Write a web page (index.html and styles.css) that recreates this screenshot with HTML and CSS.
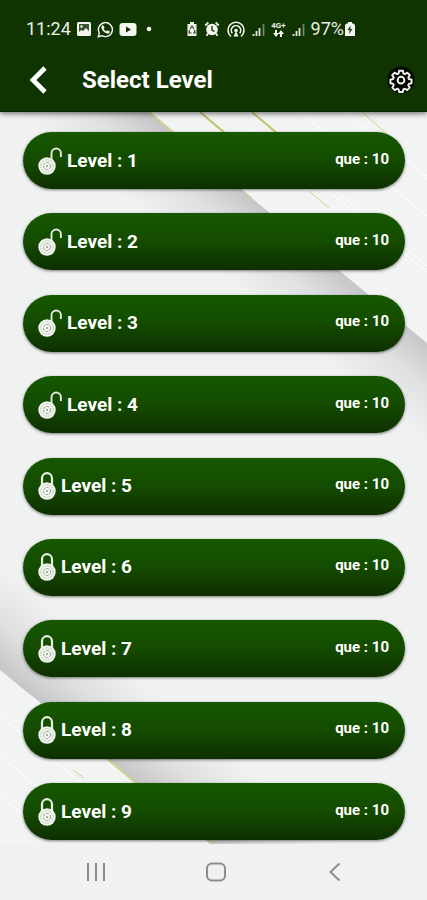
FILE: index.html
```html
<!DOCTYPE html>
<html lang="en">
<head>
<meta charset="utf-8">
<meta name="viewport" content="width=device-width, initial-scale=1">
<title>Select Level</title>
<link rel="stylesheet" href="styles.css">
</head>
<body>
<svg class="symbols" aria-hidden="true">
  <defs>
    <g id="dial">
      <circle cx="9" cy="19" r="8.7" fill="#f4f6f1"/>
      <circle cx="9" cy="19" r="6.2" fill="none" stroke="#a3b29d" stroke-width=".9" stroke-dasharray="1.4 1"/>
      <circle cx="9" cy="19" r="3.6" fill="none" stroke="#879b81" stroke-width=".9" stroke-dasharray="3 1"/>
      <circle cx="9" cy="19" r="1.2" fill="#a3b29d"/>
    </g>
    <symbol id="unlocked" viewBox="0 0 24 28">
      <path d="M13.500 13V6.200a4.700 4.700 0 0 1 9.400 0V10" fill="none" stroke="#e3eadf" stroke-width="1.900"/>
      <use href="#dial"/>
    </symbol>
    <symbol id="locked" viewBox="0 0 18 28">
      <path d="M4 13V6.200a5 5 0 0 1 10 0V13" fill="none" stroke="#e9efe5" stroke-width="2.200"/>
      <use href="#dial"/>
    </symbol>
    <symbol id="signal" viewBox="0 0 13 14">
      <path d="M1.500 14v-2M4.500 14v-5M7.500 14V6" stroke="#dfe6db" stroke-width="1.800"/>
      <path d="M11.500 14V2" stroke="#718865" stroke-width="1.800"/>
    </symbol>
  </defs>
</svg>

<header class="top">
  <div class="status">
    <div class="status-left">
      <span>11:24</span>
      <svg width="16" height="16" viewBox="0 0 16 16"><rect x="1" y="1" width="14" height="14" rx="1.500" fill="#f2f5f0"/><path d="M3 3h10v7l-3-3-3 3-2-1-2 2z" fill="#38542c"/><circle cx="5.500" cy="5.500" r="1.200" fill="#f2f5f0"/></svg>
      <svg width="17" height="17" viewBox="0 0 17 17"><path d="M1.300 15.700l1-3.700A7 7 0 1 1 5 14.700z" fill="none" stroke="#f2f5f0" stroke-width="1.400"/><path d="M5 4.500l1.300-.3 1.300 2.500-.9 1.100c.6 1.300 1.300 1.900 2.600 2.500l1-1.100 2.500 1.200c0 1.500-1 2.300-2.200 2.200C7.300 12 4.600 9.200 4.300 6.300z" fill="#f2f5f0"/></svg>
      <svg width="18" height="16" viewBox="0 0 18 16"><rect x=".5" y="2" width="17" height="13" rx="3" fill="#f2f5f0"/><path d="M7 5.500l5 3-5 3z" fill="#103400"/></svg>
      <svg class="dot" width="6" height="16" viewBox="0 0 6 16"><circle cx="3" cy="8" r="2.300" fill="#f2f5f0"/></svg>
    </div>
    <div class="status-right">
      <svg width="12" height="16" viewBox="0 0 12 16"><path d="M4 1h4v2h2.500v12h-9V3H4z" fill="#f2f5f0"/><path d="M4 8l2-3 2 3M3.500 9l-.5 3h2.500M8.500 9l.5 3H7" fill="none" stroke="#284619" stroke-width="1.200"/></svg>
      <svg width="16" height="16" viewBox="0 0 16 16"><circle cx="8" cy="8.500" r="5.800" fill="#f2f5f0"/><path d="M1.300 4.500l3-3M14.700 4.500l-3-3M4 12.500l-1.500 2.300M12 12.500l1.500 2.300" stroke="#f2f5f0" stroke-width="1.900"/><path d="M8 5v4l2.500 1.500" fill="none" stroke="#103400" stroke-width="1.400"/></svg>
      <svg width="20" height="17" viewBox="0 0 20 17"><g fill="none" stroke="#f2f5f0" stroke-width="1.600"><path d="M5 15.500a8 8 0 1 1 10 0"/><path d="M6.300 12.300a4.700 4.700 0 1 1 7.400 0"/></g><circle cx="10" cy="9.500" r="1.800" fill="#f2f5f0"/><path d="M10 10l2.500 5.500h-5z" fill="#f2f5f0"/></svg>
      <svg width="13" height="14"><use href="#signal"/></svg>
      <span class="network"><span>4G+</span><svg width="11" height="7" viewBox="0 0 11 7"><path d="M0 3h2V0h2v3h2L3 7zM5 4l3-4 3 4H9v3H7V4z" fill="#f2f5f0"/></svg></span>
      <svg width="13" height="14"><use href="#signal"/></svg>
      <span class="charge">97%<svg width="12" height="16" viewBox="0 0 12 16"><path d="M4 1h4v1.500h1.500L11 4v11H1V4l1.500-1.500H4z" fill="#f2f5f0"/><path d="M6.500 4.500L3.500 9h2l-.5 4 3.500-5h-2z" fill="#284619"/></svg></span>
    </div>
  </div>
  <div class="bar">
    <button class="icon-button" type="button" aria-label="Back"><svg width="20" height="28" viewBox="0 0 20 28"><path d="M17 2L5 14l12 12" fill="none" stroke="#fff" stroke-width="4.800"/></svg></button>
    <h1>Select Level</h1>
    <button class="icon-button" type="button" aria-label="Settings"><svg width="28" height="28" viewBox="0 0 28 28"><circle cx="14" cy="14" r="13.500" fill="#040a02"/><g transform="translate(14 14) scale(.86) translate(-14 -14.300)" fill="none" stroke="#f4f4f4" stroke-width="2.200" stroke-linejoin="round"><path d="M11.800 3.600h4.400l.6 3.100 1.700.8 2.800-1.700 3 3-1.800 2.700.6 1.600 3.200.8v4.200l-3.200.7-.7 1.600 1.800 2.800-3 2.900-2.700-1.700-1.700.7-.7 3.200h-4.200l-.7-3.200-1.700-.7-2.700 1.700-3-2.900 1.800-2.800-.7-1.600-3.200-.7v-4.200l3.200-.8.700-1.600-1.900-2.700 3-3 2.800 1.700 1.700-.8z"/><circle cx="14" cy="14.500" r="3.900"/></g></svg></button>
  </div>
</header>

<main class="levels-area">
  <svg class="backdrop" viewBox="0 0 427 732" preserveAspectRatio="xMidYMid slice" aria-hidden="true">
    <defs>
      <linearGradient id="upper" gradientUnits="userSpaceOnUse" x1="266" y1="98" x2="216" y2="159"><stop offset="0" stop-color="#c6c6c8"/><stop offset=".45" stop-color="#dfe0e1"/><stop offset="1" stop-color="#f0f2f2"/></linearGradient>
      <linearGradient id="lower" gradientUnits="userSpaceOnUse" x1="60" y1="608" x2="112" y2="545"><stop offset="0" stop-color="#c6c6c8"/><stop offset=".45" stop-color="#dfdfe0"/><stop offset="1" stop-color="#f0f2f2"/></linearGradient>
    </defs>
    <rect width="427" height="732" fill="#f0f2f2"/>
    <path d="M148 0L427 231V400L0 47V0z" fill="url(#upper)"/>
    <path d="M0 558L210 732H427V720L0 367z" fill="url(#lower)"/>
    <path d="M148 0H427V231z" fill="#f2f3f3"/>
    <path d="M0 558L210 732H0z" fill="#f2f3f3"/>
    <g fill="none" stroke="#fff" stroke-width="1">
      <path d="M300 0L427 104M345 0L427 67M330 75L427 154M385 30L427 64M250 15L427 160M0 604L155 732M0 644L107 732M0 684L60 732M30 583L120 657"/>
    </g>
    <g fill="none" stroke="#d3cf8c" stroke-width="2">
      <path d="M149 0L174 21M105 645L137 672M198 718L214 732"/>
      <path d="M200 0L226 22M252 0L278 22" stroke="#c5bf68"/>
      <path d="M362 0L387 22M347 57L366 74M309 79L329 96M241 77L252 86M73 658L84 666" stroke-width="1"/>
    </g>
  </svg>
  <ul class="levels">
    <li><button class="level" type="button"><svg width="24" height="28"><use href="#unlocked"/></svg><span class="name">Level : 1</span><span class="count">que : 10</span></button></li>
    <li><button class="level" type="button"><svg width="24" height="28"><use href="#unlocked"/></svg><span class="name">Level : 2</span><span class="count">que : 10</span></button></li>
    <li><button class="level" type="button"><svg width="24" height="28"><use href="#unlocked"/></svg><span class="name">Level : 3</span><span class="count">que : 10</span></button></li>
    <li><button class="level" type="button"><svg width="24" height="28"><use href="#unlocked"/></svg><span class="name">Level : 4</span><span class="count">que : 10</span></button></li>
    <li><button class="level" type="button"><svg width="18" height="28"><use href="#locked"/></svg><span class="name">Level : 5</span><span class="count">que : 10</span></button></li>
    <li><button class="level" type="button"><svg width="18" height="28"><use href="#locked"/></svg><span class="name">Level : 6</span><span class="count">que : 10</span></button></li>
    <li><button class="level" type="button"><svg width="18" height="28"><use href="#locked"/></svg><span class="name">Level : 7</span><span class="count">que : 10</span></button></li>
    <li><button class="level" type="button"><svg width="18" height="28"><use href="#locked"/></svg><span class="name">Level : 8</span><span class="count">que : 10</span></button></li>
    <li><button class="level" type="button"><svg width="18" height="28"><use href="#locked"/></svg><span class="name">Level : 9</span><span class="count">que : 10</span></button></li>
  </ul>
</main>

<nav class="system-nav" aria-label="System">
  <button class="icon-button" type="button" aria-label="Recent apps"><svg width="20" height="20" viewBox="0 0 20 20"><path d="M2 1v18M10 1v18M18 1v18" stroke="#8c8c8c" stroke-width="2"/></svg></button>
  <button class="icon-button" type="button" aria-label="Home"><svg width="20" height="20" viewBox="0 0 20 20"><rect x="1" y="1.500" width="18" height="17" rx="5" fill="none" stroke="#8c8c8c" stroke-width="2"/></svg></button>
  <button class="icon-button" type="button" aria-label="Back"><svg width="20" height="20" viewBox="0 0 20 20"><path d="M14.500 1.500L5.500 10l9 8.500" fill="none" stroke="#8c8c8c" stroke-width="2"/></svg></button>
</nav>
</body>
</html>
```

FILE: styles.css
```css
* {
  box-sizing: border-box;
}

body {
  margin: 0;
  min-height: 100vh;
  display: flex;
  flex-direction: column;
  background: #f1f1f1;
  font-family: Roboto, "Liberation Sans", sans-serif;
}

svg {
  display: block;
  flex: none;
}

.symbols {
  position: absolute;
  width: 0;
  height: 0;
}

.top {
  position: relative;
  z-index: 1;
  background: #103400;
  color: #fff;
  border-bottom: 1px solid #0a1d03;
  box-shadow: 0 2px 5px rgba(0, 0, 0, 0.5);
}

.status {
  display: flex;
  justify-content: space-between;
  align-items: center;
  height: 48px;
  padding: 10px 71px 0 26px;
  font-size: 18px;
  line-height: 20px;
  color: #e9eee6;
}

.status-left,
.status-right {
  display: flex;
  align-items: center;
  gap: 5px;
}

.status-right {
  gap: 6px;
}

.dot {
  margin-left: 4px;
}

.charge {
  display: flex;
  align-items: center;
}

.network {
  display: flex;
  flex-direction: column;
  align-items: center;
  font-size: 8px;
  line-height: 8px;
  font-weight: 700;
}

.bar {
  display: flex;
  align-items: center;
  height: 63px;
  padding: 0 12px 0 28px;
}

.icon-button {
  display: flex;
  align-items: center;
  justify-content: center;
  padding: 0;
  border: 0;
  background: none;
}

h1 {
  flex: 1;
  margin: 0 0 0 34px;
  font-size: 24px;
  line-height: 28px;
  font-weight: 700;
}

.levels-area {
  position: relative;
  flex: 1;
  display: flex;
  padding: 20px 22px 4px 23px;
}

.backdrop {
  position: absolute;
  inset: 0;
  width: 100%;
  height: 100%;
}

.levels {
  position: relative;
  flex: 1;
  display: flex;
  flex-direction: column;
  justify-content: space-between;
  gap: 16px;
  margin: 0;
  padding: 0;
  list-style: none;
}

.level {
  display: flex;
  align-items: center;
  gap: 5px;
  width: 100%;
  height: 57px;
  padding: 0 16px 0 15px;
  border: 0;
  border-radius: 29px;
  background: linear-gradient(#165800, #144b00 50%, #0e2f00);
  box-shadow: 0 1px 3px rgba(0, 0, 0, 0.5);
  color: #fff;
  font-family: inherit;
  font-weight: 700;
}

.name {
  font-size: 19px;
  line-height: 24px;
}

.count {
  margin-left: auto;
  padding-bottom: 4px;
  font-size: 15px;
  line-height: 18px;
}

.system-nav {
  display: flex;
  justify-content: space-between;
  height: 56px;
  padding: 0 82px 0 86px;
  background: #f1f1f1;
}
```
